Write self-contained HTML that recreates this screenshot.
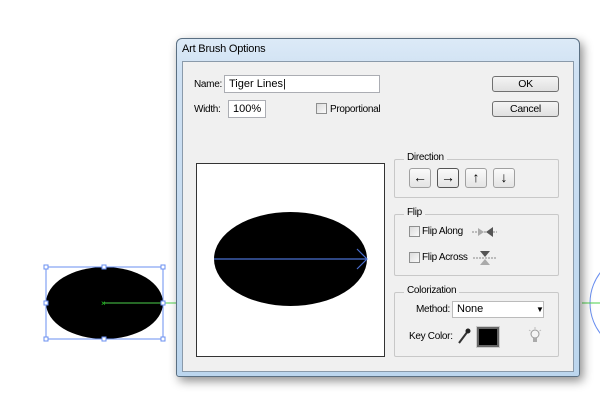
<!DOCTYPE html>
<html><head><style>
*{margin:0;padding:0;box-sizing:border-box}
body{width:600px;height:400px;background:#fff;position:relative;overflow:hidden;font-family:"Liberation Sans",sans-serif;font-size:10px;letter-spacing:-0.3px;color:#000}
.a{position:absolute;white-space:nowrap}
.frame{left:176px;top:38px;width:404px;height:339px;border:1px solid #5a6f82;border-radius:6px 6px 3px 3px;background:linear-gradient(180deg,#dceaf7 0%,#cfe1f3 10%,#bcd6ee 100%);box-shadow:3px 4px 10px rgba(0,0,0,.45)}
.client{left:182px;top:61px;width:392px;height:311px;background:#f0f0f0;border:1px solid #8a9aaa}
.inp{background:#fff;border:1px solid #abadb3;font-size:11px;padding:2px 4px;letter-spacing:0}
.btn{border:1px solid #707070;border-radius:3px;background:linear-gradient(#f4f4f4,#e0e0e0);text-align:center;font-size:10.5px;line-height:14px}
.grp{border:1px solid #c8c8c8;border-radius:2px}
.lg{background:#f0f0f0;padding:0 3px}
.cb{width:11px;height:11px;border:1px solid #8e8f8f;background:linear-gradient(135deg,#dcdcdc,#fafafa)}
.db{width:22px;height:20px;border:1px solid #a0a0a0;border-radius:3px;background:linear-gradient(#fafafa,#e4e4e4);font-size:14px;text-align:center;line-height:17px;letter-spacing:0}
</style></head><body>
<svg class="a" style="left:0;top:0" width="600" height="400">
<ellipse cx="104.5" cy="303" rx="58.5" ry="36" fill="#000"/>
<rect x="46" y="267" width="117" height="72" fill="none" stroke="#6a8ff0" stroke-width="1"/>
<line x1="104" y1="303" x2="180" y2="303" stroke="#4bd04b"/>
<text x="101" y="306" font-size="8" fill="#2c2">×</text>
<g fill="#fff" stroke="#6a8ff0">
<rect x="44" y="265" width="4" height="4"/><rect x="102" y="265" width="4" height="4"/><rect x="161" y="265" width="4" height="4"/>
<rect x="44" y="301" width="4" height="4"/><rect x="161" y="301" width="4" height="4"/>
<rect x="44" y="337" width="4" height="4"/><rect x="102" y="337" width="4" height="4"/><rect x="161" y="337" width="4" height="4"/>
</g>
<circle cx="640" cy="303" r="50" fill="none" stroke="#6a8ff0"/>
<line x1="582" y1="303" x2="600" y2="303" stroke="#4bd04b"/>
</svg>
<div class="a frame"></div>
<div class="a" style="left:182px;top:43px;font-size:11px;letter-spacing:-0.2px">Art Brush Options</div>
<div class="a client"></div>
<div class="a" style="left:194px;top:79px">Name:</div>
<div class="a inp" style="left:224px;top:75px;width:156px;height:18px">Tiger Lines|</div>
<div class="a" style="left:194px;top:104px">Width:</div>
<div class="a inp" style="left:228px;top:100px;width:38px;height:18px">100%</div>
<div class="a cb" style="left:316px;top:103px"></div>
<div class="a" style="left:330px;top:104px">Proportional</div>
<div class="a btn" style="left:492px;top:76px;width:67px;height:16px">OK</div>
<div class="a btn" style="left:492px;top:101px;width:67px;height:16px">Cancel</div>
<div class="a" style="left:196px;top:163px;width:189px;height:194px;background:#fff;border:1px solid #333"></div>
<svg class="a" style="left:196px;top:163px" width="189" height="194">
<ellipse cx="94.5" cy="96" rx="76.5" ry="47" fill="#000"/>
<line x1="18" y1="96" x2="171" y2="96" stroke="#4a6fd0" stroke-width="1.3"/>
<polyline points="161,86 171,96 161,106" fill="none" stroke="#4a6fd0" stroke-width="1.2"/>
</svg>
<div class="a grp" style="left:394px;top:159px;width:165px;height:39px"></div>
<div class="a lg" style="left:404px;top:152px">Direction</div>
<div class="a db" style="left:409px;top:168px">←</div>
<div class="a db" style="left:437px;top:168px;border-color:#555">→</div>
<div class="a db" style="left:465px;top:168px">↑</div>
<div class="a db" style="left:493px;top:168px">↓</div>
<div class="a grp" style="left:394px;top:214px;width:165px;height:62px"></div>
<div class="a lg" style="left:404px;top:207px">Flip</div>
<div class="a cb" style="left:409px;top:226px"></div>
<div class="a" style="left:422px;top:226px">Flip Along</div>
<div class="a cb" style="left:409px;top:252px"></div>
<div class="a" style="left:422px;top:252px">Flip Across</div>
<svg class="a" style="left:470px;top:224px" width="30" height="45">
<line x1="2" y1="8" x2="27" y2="8" stroke="#888" stroke-dasharray="2,1"/>
<polygon points="8,4 14,8 8,12" fill="#aaa"/><polygon points="23,3 16,8 23,13" fill="#555"/>
<line x1="3" y1="34" x2="27" y2="34" stroke="#888" stroke-dasharray="2,1"/>
<polygon points="10,27 20,27 15,33" fill="#555"/><polygon points="10,41 20,41 15,35" fill="#aaa"/>
</svg>
<div class="a grp" style="left:394px;top:292px;width:165px;height:65px"></div>
<div class="a lg" style="left:404px;top:285px">Colorization</div>
<div class="a" style="left:416px;top:304px">Method:</div>
<div class="a inp" style="left:452px;top:301px;width:92px;height:17px;border-color:#bbb;padding-top:1px">None</div>
<div class="a" style="left:536px;top:305px;font-size:8px">▼</div>
<div class="a" style="left:409px;top:331px">Key Color:</div>
<svg class="a" style="left:457px;top:327px" width="14" height="18"><line x1="2" y1="16" x2="11" y2="4" stroke="#333" stroke-width="2"/><circle cx="11" cy="4" r="2.5" fill="#222"/></svg>
<div class="a" style="left:477px;top:327px;width:22px;height:20px;border:2px solid #666;background:#000;outline:1px solid #ccc"></div>
<svg class="a" style="left:528px;top:327px" width="14" height="18"><circle cx="7" cy="7" r="4" fill="#f4f4f4" stroke="#999"/><rect x="5" y="11" width="4" height="4" fill="#aaa"/><g stroke="#bbb"><line x1="7" y1="0" x2="7" y2="2"/><line x1="1" y1="3" x2="2.5" y2="4"/><line x1="13" y1="3" x2="11.5" y2="4"/></g></svg>
</body></html>
